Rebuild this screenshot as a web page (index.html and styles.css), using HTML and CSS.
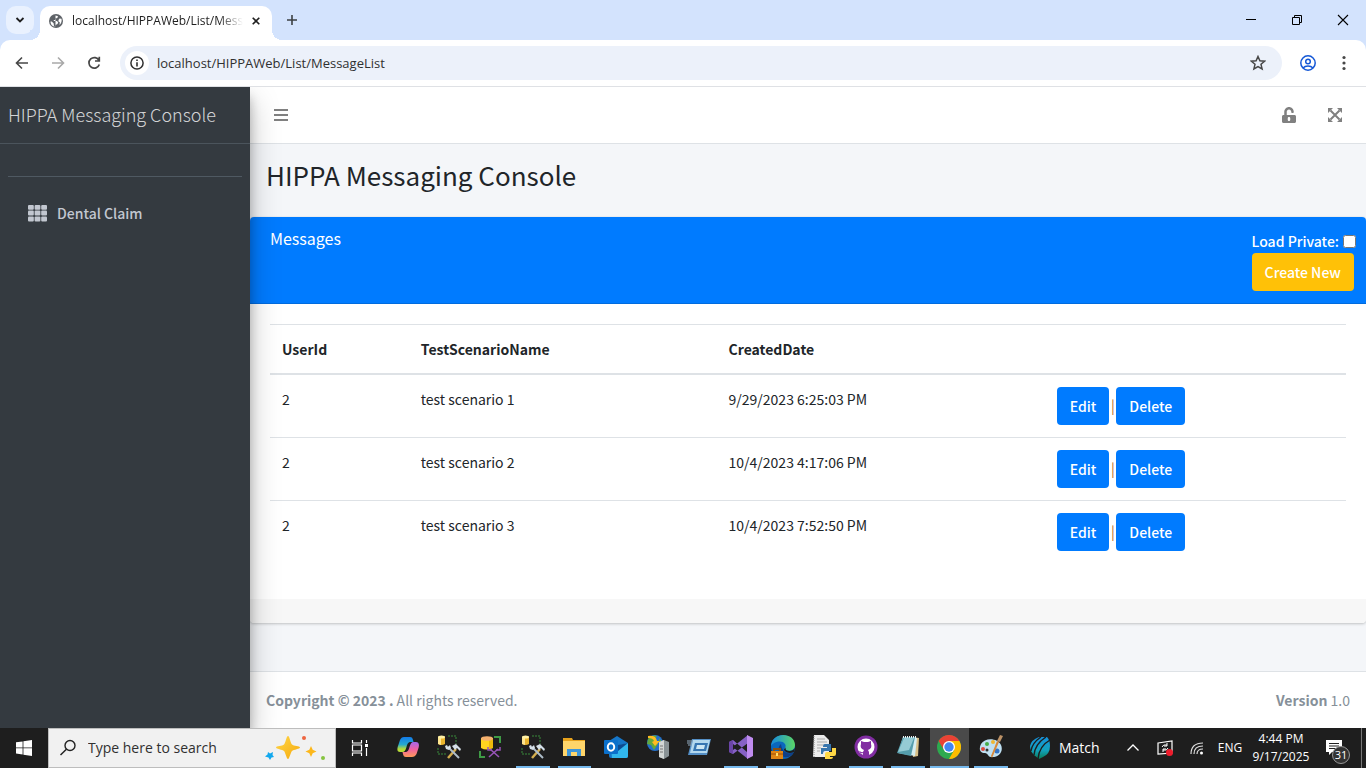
FILE: index.html
```html
<!DOCTYPE html>
<html lang="en">
<head>
<meta charset="utf-8">
<title>HIPPA Messaging Console</title>
<link rel="stylesheet" href="styles.css">
</head>
<body>
<header class="browser">
  <div class="tabstrip">
    <button class="tab-search" aria-label="Search tabs"><svg width="10" height="10" viewBox="0 0 10 10"><path d="M1.500 3l3.500 3.500L8.500 3" fill="none" stroke="#1f1f1f" stroke-width="1.800"/></svg></button>
    <div class="tab">
      <svg width="14" height="14" viewBox="0 0 14 14"><circle cx="7" cy="7" r="7" fill="#5f6368"/><path d="M6.500 1.600L9 2.200 8.300 4 6.500 4.400 6 6H4.600L5 7h3l1.200 1.400-.7 1.600-1.500.8-.8 1.900L5 12l-.4-2.700L2.700 7.500H1.500C1.500 10.500 3.500 12.700 6.500 12.700M9.500 6l1-1.500 2 .2c.6 2.500-.3 4.800-2 6.300l.3-2.800L9.500 7.500z" fill="#fff"/></svg>
      <span class="tab-title">localhost/HIPPAWeb/List/MessageList</span>
      <button class="tab-close" aria-label="Close tab"><svg width="8" height="8" viewBox="0 0 8 8"><path d="M.7.7l6.600 6.600M7.300.7L.7 7.300" stroke="#1f1f1f" stroke-width="1.600"/></svg></button>
    </div>
    <button class="new-tab" aria-label="New tab"><svg width="12" height="12" viewBox="0 0 12 12"><path d="M6 1v10M1 6h10" stroke="#3c4043" stroke-width="1.600"/></svg></button>
    <div class="window-controls">
      <button aria-label="Minimize"><svg width="12" height="12" viewBox="0 0 12 12"><path d="M1 5.500h10" stroke="#000"/></svg></button>
      <button aria-label="Restore"><svg width="12" height="12" viewBox="0 0 12 12"><path d="M1.500 3.500h7v7h-7zM3.500 3.500v-2h7v7h-2" fill="none" stroke="#000"/></svg></button>
      <button aria-label="Close"><svg width="12" height="12" viewBox="0 0 12 12"><path d="M1 1l10 10M11 1L1 11" stroke="#000" stroke-width="1.100"/></svg></button>
    </div>
  </div>
  <div class="toolbar">
    <button class="nav-button" aria-label="Back"><svg width="14" height="14" viewBox="0 0 14 14"><path d="M13 7H2M7 1.500L1.500 7 7 12.500" fill="none" stroke="#474747" stroke-width="1.600"/></svg></button>
    <button class="nav-button" aria-label="Forward"><svg width="14" height="14" viewBox="0 0 14 14"><path d="M1 7h11M7 1.500L12.500 7 7 12.500" fill="none" stroke="#a9a9a9" stroke-width="1.600"/></svg></button>
    <button class="nav-button" aria-label="Reload"><svg width="14" height="14" viewBox="0 0 14 14"><path d="M12 4.500A5.300 5.300 0 1 0 12.300 8.500M12.300.8V5H8" fill="none" stroke="#474747" stroke-width="1.700"/></svg></button>
    <div class="omnibox">
      <button class="site-info" aria-label="Site information"><svg width="14" height="14" viewBox="0 0 14 14"><circle cx="7" cy="7" r="6.100" fill="none" stroke="#303030" stroke-width="1.500"/><path d="M7 3.500v1.500M7 6.300v4.200" stroke="#303030" stroke-width="1.600"/></svg></button>
      <input class="address" type="text" aria-label="Address" value="localhost/HIPPAWeb/List/MessageList">
      <button class="bookmark" aria-label="Bookmark"><svg width="16" height="16" viewBox="0 0 16 16"><path d="M8 1.500l1.900 4.300 4.700.4-3.600 3.100 1.100 4.600L8 11.500l-4.100 2.400L5 9.300 1.400 6.200l4.700-.4z" fill="none" stroke="#474747" stroke-width="1.500"/></svg></button>
    </div>
    <button class="tool-button" aria-label="Profile"><svg width="16" height="16" viewBox="0 0 16 16"><g fill="none" stroke="#1558d6" stroke-width="1.500"><circle cx="8" cy="8" r="7.200"/><circle cx="8" cy="6.500" r="2.300"/><path d="M3 13c2.500-2.800 7.500-2.800 10 0"/></g></svg></button>
    <button class="tool-button" aria-label="Menu"><svg width="4" height="16" viewBox="0 0 4 16"><g fill="#474747"><circle cx="2" cy="2.500" r="1.600"/><circle cx="2" cy="8" r="1.600"/><circle cx="2" cy="13.500" r="1.600"/></g></svg></button>
  </div>
</header>

<div class="app">
  <aside class="sidebar">
    <a class="brand" href="#">HIPPA Messaging Console</a>
    <div class="sidebar-body">
      <div class="user-panel"></div>
      <nav>
        <a class="side-link" href="#"><svg width="19" height="17" viewBox="0 0 19 17" fill="#c2c7d0"><rect width="5.800" height="4.800" rx="1"/><rect x="6.600" width="5.800" height="4.800" rx="1"/><rect x="13.200" width="5.800" height="4.800" rx="1"/><rect y="5.600" width="5.800" height="5" rx="1"/><rect x="6.600" y="5.600" width="5.800" height="5" rx="1"/><rect x="13.200" y="5.600" width="5.800" height="5" rx="1"/><rect y="11.400" width="5.800" height="5" rx="1"/><rect x="6.600" y="11.400" width="5.800" height="5" rx="1"/><rect x="13.200" y="11.400" width="5.800" height="5" rx="1"/></svg><span>Dental Claim</span></a>
      </nav>
    </div>
  </aside>
  <div class="main">
    <nav class="navbar">
      <button aria-label="Toggle sidebar"><svg width="14" height="14" viewBox="0 0 14 14"><path d="M0 2h14M0 7h14M0 12h14" stroke="#808080" stroke-width="2"/></svg></button>
      <button class="lock" aria-label="Unlock"><svg width="14" height="16" viewBox="0 0 448 512"><path fill="#808080" d="M400 256H152V152.900c0-39.600 31.700-72.500 71.300-72.900 40-.4 72.700 32.100 72.700 72v16c0 13.300 10.700 24 24 24h32c13.300 0 24-10.700 24-24v-16C376 68 307.500-.3 223.500 0 139.500.3 72 69.500 72 153.500V256H48c-26.500 0-48 21.500-48 48v160c0 26.500 21.500 48 48 48h352c26.500 0 48-21.500 48-48V304c0-26.500-21.500-48-48-48zM264 408c0 22.100-17.900 40-40 40s-40-17.900-40-40v-48c0-22.100 17.900-40 40-40s40 17.900 40 40v48z"/></svg></button>
      <button aria-label="Full screen"><svg width="14" height="14" viewBox="0 0 14 14"><path d="M2.500 2.500l9 9M11.500 2.500l-9 9" stroke="#808080" stroke-width="2"/><path d="M0 0h5L0 5zM14 0v5L9 0zM0 14V9l5 5zM14 14H9l5-5z" fill="#808080"/></svg></button>
    </nav>
    <main class="content">
      <h1>HIPPA Messaging Console</h1>
      <section class="card">
        <div class="card-header">
          <h2>Messages</h2>
          <div class="card-tools">
            <label class="private">Load Private: <input type="checkbox"></label>
            <button class="btn btn-warning">Create New</button>
          </div>
        </div>
        <div class="card-body">
          <table>
            <colgroup><col class="col-user"><col class="col-name"><col class="col-date"><col></colgroup>
            <thead><tr><th scope="col">UserId</th><th scope="col">TestScenarioName</th><th scope="col">CreatedDate</th><th></th></tr></thead>
            <tbody>
              <tr><td>2</td><td>test scenario 1</td><td>9/29/2023 6:25:03 PM</td><td><div class="actions"><button class="btn">Edit</button><span>|</span><button class="btn">Delete</button></div></td></tr>
              <tr><td>2</td><td>test scenario 2</td><td>10/4/2023 4:17:06 PM</td><td><div class="actions"><button class="btn">Edit</button><span>|</span><button class="btn">Delete</button></div></td></tr>
              <tr><td>2</td><td>test scenario 3</td><td>10/4/2023 7:52:50 PM</td><td><div class="actions"><button class="btn">Edit</button><span>|</span><button class="btn">Delete</button></div></td></tr>
            </tbody>
          </table>
        </div>
        <div class="card-footer"></div>
      </section>
    </main>
    <footer class="footer">
      <div><strong>Copyright © 2023 .</strong> All rights reserved.</div>
      <div><strong>Version</strong> 1.0</div>
    </footer>
  </div>
</div>

<footer class="taskbar">
  <button class="start" aria-label="Start"><svg width="16" height="16" viewBox="0 0 16 16"><path d="M0 2.300l6.600-.9v6.100H0zM7.400 1.300L16 0v7.500H7.400zM0 8.300h6.600v6.200L0 13.600zM7.400 8.300H16V16l-8.600-1.300z" fill="#fff"/></svg></button>
  <div class="search">
    <svg width="18" height="18" viewBox="0 0 18 18"><circle cx="11" cy="6.500" r="5" fill="none" stroke="#222" stroke-width="1.400"/><path d="M7.400 10.200L1.500 16" stroke="#222" stroke-width="1.500"/></svg>
    <input type="text" aria-label="Search" placeholder="Type here to search">
    <svg width="62" height="28" viewBox="0 0 62 28"><defs><linearGradient id="gold" x2="1" y2="1"><stop stop-color="#ffd74a"/><stop offset="1" stop-color="#f5a90b"/></linearGradient></defs><path d="M23 2c1.500 0 2.500 7 4 8.500S35 12 35 13.500s-6.500 2-8 3.500-2.500 8-4 8-2.500-6.500-4-8-8-2-8-3.500 6.500-1.500 8-3S21.500 2 23 2z" fill="url(#gold)"/><path d="M46 12l1.700 3.800 3.800 1.700-3.800 1.700L46 23l-1.700-3.800-3.800-1.700 3.800-1.700z" fill="#fcb71b"/><path d="M3 18l2 1.500L8 18l-.5 3 1.500 2-2.500.4L5 26l-1.500-2.500L0 22.500l2.500-2z" fill="#12a8ee"/><circle cx="39" cy="4" r="2" fill="#ee6540"/><circle cx="58" cy="24" r="2" fill="#86c440"/></svg>
  </div>
  <button class="task-view" aria-label="Task view"><svg width="18" height="16" viewBox="0 0 18 16"><path d="M1.500 0v3h9V0M1.500 16v-3h9v3M1.500 5h9v6h-9zM15.500 0v3M15.500 8v8" fill="none" stroke="#fff" stroke-width="1.200"/><path d="M14 4h3v3h-3z" fill="#fff"/></svg></button>
  <div class="apps">
    <button aria-label="Copilot"><svg viewBox="0 0 24 24"><defs><linearGradient id="cb" x2="0" y2="1"><stop stop-color="#137bea"/><stop offset=".5" stop-color="#26a9ce"/><stop offset=".8" stop-color="#b7db37"/></linearGradient><linearGradient id="cp" x2="0" y2="1"><stop stop-color="#a467ee"/><stop offset=".5" stop-color="#f0629f"/><stop offset="1" stop-color="#ff9a57"/></linearGradient></defs><path d="M8 2h6c2 0 2.500 1 3 3l.5 2H15c-3 0-3.500 1.500-4.500 5s-2 5-4 5H4c-3 0-3-3-2-6L4 5c1-2 2-3 4-3z" fill="url(#cb)"/><path d="M16 22h-6c-2 0-2.500-1-3-3l-.5-2H9c3 0 3.500-1.500 4.500-5s2-5 4-5H20c3 0 3.500 3 2.500 6l-2 6c-1 2-2.500 3-4.500 3z" fill="url(#cp)"/></svg></button>
    <button aria-label="Database tools"><svg viewBox="0 0 24 24"><g id="dbtools"><path d="M11 1h8v8M1 13v6h8" fill="none" stroke="#398a3b" stroke-dasharray="2 1"/><path d="M1 2v7q3.500 2 7 0V2z" fill="#eab52e"/><path d="M1 2h3v8l-3-1z" fill="#ffe690"/><ellipse cx="4.500" cy="2" rx="3.500" ry="1.500" fill="#fff1a4"/><path d="M19 14l-8 9" stroke="#d5ae4e" stroke-width="2.500"/><path d="M11 12l11 11" stroke="#aebdc9" stroke-width="2"/><path d="M8 11l2-1 1 2 2-2 1 3-2 2-3-1zM15 11l4-2 5 5-1 2-3-3-2 2z" fill="#d5e0e8"/></g></svg></button>
    <button aria-label="Database designer"><svg viewBox="0 0 24 24"><path d="M15 2h6v6M1 16v6h5" fill="none" stroke="#3e9b45" stroke-width="2"/><path d="M2 3v10q5 3 12 0V3z" fill="#ffd51f"/><path d="M10 4h4v9l-4 1z" fill="#edba0b"/><ellipse cx="8" cy="3.500" rx="6" ry="2.300" fill="#f5b16f"/><path d="M11 14l9 8M19 14l-9 8" stroke="#9854b8" stroke-width="1.600"/><path d="M9 12v3h4M21 12v3h-4" fill="none" stroke="#9854b8" stroke-width="1.500"/></svg></button>
    <button class="open" aria-label="Database tools"><svg viewBox="0 0 24 24"><use href="#dbtools"/></svg></button>
    <button class="open" aria-label="File Explorer"><svg viewBox="0 0 24 24"><path d="M1 3h9l1 2h12v4H1z" fill="#e8a21c"/><path d="M1 6h22v15H1z" fill="#ffd56a"/><path d="M5 21v-7h14v7h-4v-4H9v4z" fill="#3f96d8"/></svg></button>
    <button aria-label="Outlook"><svg viewBox="0 0 24 24"><path d="M13 1l11 7v13q0 2-2 2H7q-2 0-2-2V6z" fill="#1677c9"/><path d="M7 12l17-4v13q0 2-2 2H8z" fill="#31b7ed"/><path d="M9 11l15-3-10 8z" fill="#0d4b91"/><rect y="5" width="14" height="14" rx="1" fill="#0b70cb"/><ellipse cx="7" cy="12" rx="3.200" ry="3.700" fill="none" stroke="#fff" stroke-width="2"/></svg></button>
    <button aria-label="IIS Manager"><svg viewBox="0 0 24 24"><circle cx="9" cy="8" r="8" fill="#2370cb"/><path d="M2 4q4-5 9-3L8 6l4 3-4 6-3-5-4-1zM13 3l4 5-4 3z" fill="#62a83c"/><path d="M2 1q8-1 9 5h3l-5 5-3-4 2-1Q7 3 2 3z" fill="#ffbc20"/><path d="M13 7l5-2 5 2v14l-5 3-5-2z" fill="#899295"/><path d="M13 7l5-2v19l-5-2z" fill="#d2d6d5"/><path d="M14 11h3M14 14h3M14 17h3" stroke="#777"/></svg></button>
    <button aria-label="Run"><svg viewBox="0 0 24 24"><path d="M5 4h19l-4 16H1z" fill="#548fc6"/><path d="M6 5h17l-3 13H3z" fill="#b3d8ee"/><path d="M8 8h13l-2 8H6z" fill="#3776b2"/><path d="M10 10h8l-1 4H9z" fill="#cde7f4"/><path d="M0 6h6M0 8h5M1 10h4" stroke="#93acc1"/></svg></button>
    <button class="open" aria-label="Visual Studio"><svg viewBox="0 0 24 24"><path d="M0 7l4-2 14 12 1 7L0 9zM0 17l4 2L19 8V0L0 15z" fill="#8661c5"/><path d="M0 7l4-2v14l-4-2z" fill="#6b45a8"/><path d="M4 9l4 3-4 3z" fill="#1e1e1e"/><path d="M18 0l6 3v18l-6 3z" fill="#c08cf0"/></svg></button>
    <button class="open" aria-label="Edge"><svg viewBox="0 0 24 24"><defs><linearGradient id="eg"><stop stop-color="#168ae0"/><stop offset="1" stop-color="#5bd665"/></linearGradient></defs><circle cx="12" cy="12" r="12" fill="#0a67bd"/><path d="M0 11C1-4 24-3 24 10c0 5-5 7-9 5-3-1 1-3-1-6C11 4 2 7 0 11z" fill="url(#eg)"/><path d="M10 9c-4 3-3 10 3 13 4 1 8-1 10-5-5 3-12 1-13-8z" fill="#103f87"/><path d="M15 15c3 2 7 1 9-2l-1 4c-4 2-8 1-10-2 0-2 2-1 1-4z" fill="#1e1e1e"/><path d="M3 16v-2h6v2" fill="none" stroke="#875015" stroke-width="2"/><rect y="16" width="12" height="8" fill="#df8514"/><path d="M0 19h12" stroke="#a15008"/><path d="M5 18h2v3H5z" fill="#ffe06a"/></svg></button>
    <button aria-label="Python file"><svg viewBox="0 0 24 24"><path d="M2 0h10l5 5v17H1z" fill="#ececec"/><path d="M5 4h8M5 7h10M5 10h8M5 13h4M5 16h3" stroke="#aaa"/><path d="M2 1v21" stroke="#888" stroke-dasharray="1 1"/><path d="M13 9h6v7h-6q-2 0-2 3H9v-6h6v-1h-4q0-3 2-3z" fill="#3775ad"/><path d="M20 13h4v6q0 2-2 2h-4v1h3q0 2-2 2h-6v-5q0-2 2-2h5z" fill="#ffd845"/></svg></button>
    <button class="open" aria-label="GitHub Desktop"><svg viewBox="0 0 24 24"><circle cx="12" cy="12" r="11.500" fill="#812da2"/><circle cx="12" cy="12" r="8.500" fill="#fff"/><path d="M9 21v-3c-3 1-3-1-4-2 2 0 2 2 4 1l1-2c-3-1-4-3-3-6V6l3 1h4l3-1v3c1 3 0 5-3 6l1 2v4z" fill="#812da2"/></svg></button>
    <button class="open" aria-label="Notepad"><svg viewBox="0 0 24 24"><path d="M16 2l7 1-1 18-5 1z" fill="#d7bf87"/><path d="M7 2l14 1-2 18-17-3z" fill="#d5eef1"/><path d="M7 2h12l-4 19-14-3z" fill="#559ead"/><path d="M8 3h10l-5 12-11 2z" fill="#95cbd4"/><path d="M7 2h13" stroke="#eee" stroke-width="2" stroke-dasharray="1 1"/></svg></button>
    <button class="open active" aria-label="Chrome"><svg viewBox="0 0 24 24"><circle cx="12" cy="12" r="12" fill="#2da94f"/><path d="M1.600 6A12 12 0 0 1 22.400 6H12L7 15z" fill="#e94235"/><path d="M22.400 6A12 12 0 0 1 12 24l5.200-9L12 6z" fill="#fdbd00"/><circle cx="12" cy="12" r="6" fill="#fff"/><circle cx="12" cy="12" r="4.700" fill="#4285f4"/></svg></button>
    <button class="open" aria-label="Paint"><svg viewBox="0 0 24 24"><path d="M2 9C6 2 19 3 22 10s-3 13-10 12c-3 0-3-4-6-4-6 0-6-5-4-9z" fill="#bfe0f2"/><circle cx="8" cy="9" r="2" fill="#46ad4a"/><circle cx="14" cy="7" r="2" fill="#efb632"/><circle cx="4" cy="14" r="2" fill="#dd4840"/><circle cx="8" cy="15" r="1.500" fill="#333"/><circle cx="18" cy="16" r="2.500" fill="#3474c5"/><path d="M20 7l-7 16-1-2 6-15z" fill="#d7883a"/><path d="M18 6l3-6 3 1-3 6z" fill="#bc9267"/></svg></button>
  </div>
  <button class="news"><svg width="20" height="22" viewBox="0 0 20 22"><defs><linearGradient id="icc" x2="0" y2="1"><stop stop-color="#1692dc"/><stop offset=".6" stop-color="#13a2bd"/><stop offset="1" stop-color="#087d57"/></linearGradient></defs><path d="M9 0h8q3 3 3 9 0 8-7 11l-4 2-5-4q-4-4-4-9 1-6 9-9z" fill="url(#icc)"/><path d="M11 0Q2 6 1 14M16 0Q5 7 4 18M20 3Q9 9 8 22" fill="none" stroke="#1e1e1e" stroke-width="1.400"/></svg><span>Match</span></button>
  <div class="tray">
    <button aria-label="Show hidden icons"><svg width="12" height="8" viewBox="0 0 12 8"><path d="M.5 6.500L6 1l5.500 5.500" fill="none" stroke="#fff" stroke-width="1.300"/></svg></button>
    <button aria-label="Update status"><svg width="17" height="16" viewBox="0 0 17 16"><path d="M1 3l14-2v12L1 14z" fill="none" stroke="#fff" stroke-width="1.200"/><path d="M5 7q1-3 5-2M10 3v3H7M11 8q-1 3-5 2M6 12V9h3" fill="none" stroke="#fff"/><circle cx="12.500" cy="12.500" r="3.500" fill="#ed1c2c"/></svg></button>
    <button aria-label="Network"><svg width="14" height="14" viewBox="0 0 14 14"><path d="M1 13Q1 2 13 2M4 13q0-8 9-8M7 13q0-5 6-5" fill="none" stroke="#ddd" stroke-width="1.200"/><circle cx="11.500" cy="12" r="1.500" fill="#fff"/></svg></button>
    <button class="language">ENG</button>
    <button class="clock"><span>4:44 PM</span><span>9/17/2025</span></button>
    <button class="notice" aria-label="Notifications"><svg width="16" height="16" viewBox="0 0 16 16"><path d="M0 0h16v12H6l-3 3v-3H0z" fill="#fff"/><path d="M3 3.500h10M3 6h10M3 8.500h7" stroke="#222"/></svg><span>31</span></button>
  </div>
</footer>
</body>
</html>
```
FILE: styles.css
```css
* { box-sizing: border-box; }
body {
  display: flex;
  flex-direction: column;
  min-height: 100vh;
  margin: 0;
  background: #f4f6f9;
  color: #212529;
  font: 14px/24px "Noto Sans CJK SC", sans-serif;
}
button, input { font: inherit; }
button {
  display: flex;
  align-items: center;
  justify-content: center;
  padding: 0;
  border: 0;
  background: none;
  color: inherit;
}
svg { display: block; flex: none; }
a { color: inherit; text-decoration: none; }

/* Browser frame */
.browser {
  background: #d3e3fd;
  border-bottom: 1px solid #dfe1e5;
  font: 12px/20px "Open Sans", sans-serif;
}
.tabstrip { display: flex; align-items: center; height: 40px; padding-left: 6px; }
.tab-search { width: 28px; height: 28px; border-radius: 10px; background: #e9f1fe; }
.tab {
  position: relative;
  display: flex;
  align-items: center;
  align-self: flex-end;
  gap: 9px;
  width: 232px;
  height: 34px;
  margin-left: 6px;
  padding: 0 12px 4px 9px;
  border-radius: 10px 10px 0 0;
  background: #fff;
}
.tab::before, .tab::after {
  content: "";
  position: absolute;
  bottom: 0;
  width: 10px;
  height: 10px;
}
.tab::before { left: -10px; background: radial-gradient(circle at 0 0, #d3e3fd 10px, #fff 10px); }
.tab::after { right: -10px; background: radial-gradient(circle at 100% 0, #d3e3fd 10px, #fff 10px); }
.tab-title {
  flex: 1;
  overflow: hidden;
  white-space: nowrap;
  color: #1f1f1f;
  mask-image: linear-gradient(to right, #000 86%, transparent);
}
.new-tab { width: 40px; height: 40px; }
.window-controls { display: flex; margin-left: auto; }
.window-controls button { width: 46px; height: 40px; }
.toolbar {
  display: flex;
  align-items: center;
  height: 46px;
  padding: 0 4px;
  border-radius: 10px 10px 0 0;
  background: #fff;
}
.nav-button { width: 36px; height: 36px; }
.omnibox {
  display: flex;
  flex: 1;
  align-items: center;
  height: 34px;
  margin: 0 8px;
  padding: 0 16px 0 5px;
  border-radius: 17px;
  background: #ecf1fa;
}
.site-info { width: 24px; height: 24px; border-radius: 50%; background: #fff; }
.address {
  flex: 1;
  padding: 0 8px;
  border: 0;
  outline: 0;
  background: none;
  color: #303030;
  font-size: 13px;
}
.tool-button { width: 36px; height: 36px; }

/* Application */
.app { display: flex; flex: 1; }
.sidebar {
  z-index: 1;
  flex: 0 0 250px;
  background: #343a40;
  color: #c2c7d0;
  box-shadow: 0 14px 28px rgba(0, 0, 0, .25), 0 10px 10px rgba(0, 0, 0, .22);
  clip-path: inset(0 -50px 0 0);
}
.brand {
  display: block;
  padding: 15px 8px 17px;
  border-bottom: 1px solid #4b545c;
  color: rgba(255, 255, 255, .8);
  font-size: 18px;
  font-weight: 300;
}
.sidebar-body { padding: 0 8px; }
.user-panel { height: 33px; border-bottom: 1px solid #4f5962; }
.side-link {
  display: flex;
  align-items: center;
  gap: 10px;
  margin-top: 16px;
  padding: 8px 20px;
  font-weight: 500;
}
.main { display: flex; flex: 1; flex-direction: column; min-width: 0; }
.navbar {
  display: flex;
  align-items: center;
  height: 57px;
  padding: 0 8px;
  border-bottom: 1px solid #dee2e6;
  background: #fff;
}
.navbar button { width: 46px; height: 40px; }
.navbar .lock { margin-left: auto; }
.content { flex: 1; padding-bottom: 48px; }
h1 { margin: 0; padding: 15px 16px 26px; font-size: 26px; font-weight: 400; line-height: 32px; }
.card {
  overflow: hidden;
  border-radius: 4px;
  background: #fff;
  box-shadow: 0 0 1px rgba(0, 0, 0, .13), 0 1px 3px rgba(0, 0, 0, .2);
}
.card-header {
  display: flex;
  justify-content: space-between;
  padding: 12px 10px 12px 20px;
  border-bottom: 1px solid rgba(0, 0, 0, .13);
  background: #007bff;
  color: #fff;
}
h2 { margin: 0; font-size: 16px; font-weight: 400; line-height: 18px; }
.private { display: flex; align-items: center; gap: 4px; font-weight: 500; }
.private input { width: 13px; height: 13px; margin: 0; }
.btn {
  height: 38px;
  padding: 0 13px;
  border-radius: 4px;
  background: #007bff;
  color: #fff;
  font-weight: 500;
}
.btn-warning { background: #ffc107; }
.card-body { padding: 20px 20px 36px; }
table { width: 100%; border-collapse: collapse; table-layout: fixed; }
.col-user { width: 12.9%; }
.col-name { width: 28.6%; }
.col-date { width: 30.5%; }
th, td { padding: 12px; border-top: 1px solid #dee2e6; text-align: left; vertical-align: top; }
thead th { border-bottom: 2px solid #dee2e6; }
.actions { display: flex; }
.actions span { width: 7px; color: #b46a24; line-height: 36px; text-align: center; }
.card-footer { height: 24px; background: #f7f7f7; }
.footer {
  display: flex;
  justify-content: space-between;
  padding: 16px;
  border-top: 1px solid #dee2e6;
  background: #fff;
  color: #869099;
}

/* Desktop taskbar */
.taskbar {
  z-index: 2;
  display: flex;
  height: 40px;
  background: #1e1e1e;
  color: #fff;
  font: 12px/18px "Open Sans", sans-serif;
}
.start { width: 48px; }
.search {
  display: flex;
  align-items: center;
  width: 288px;
  padding: 0 8px 0 10px;
  border: 1px solid #bdbdbd;
  background: #f1f1f1;
}
.search input {
  flex: 1;
  min-width: 0;
  padding: 0 11px;
  border: 0;
  outline: 0;
  background: none;
  font-size: 14px;
}
.search input::placeholder { color: #303030; opacity: 1; }
.task-view { width: 48px; }
.apps { display: grid; flex: 1; grid-template-columns: repeat(15, 1fr); padding-left: 3px; }
.apps button { border-bottom: 2px solid transparent; }
.apps svg { width: 24px; height: 24px; }
.apps .open { margin: 0 4px; border-color: #76b9ed; }
.apps .active { margin: 0 1px; background: #4a4a4a; }
.news { gap: 9px; width: 105px; padding-left: 18px; justify-content: flex-start; font-size: 14px; }
.tray { display: flex; width: 249px; padding-right: 4px; }
.tray button { flex: 0 0 32px; }
.tray .language { flex-basis: 34px; }
.tray .clock { flex: 0 0 68px; flex-direction: column; }
.tray .notice { position: relative; flex: 1; justify-content: flex-start; padding-left: 11px; border-right: 1px solid #777; }
.notice span {
  position: absolute;
  top: 18px;
  left: 17px;
  width: 18px;
  height: 18px;
  border: 1px solid #999;
  border-radius: 50%;
  background: #333;
  font-size: 11px;
  line-height: 16px;
}
```
